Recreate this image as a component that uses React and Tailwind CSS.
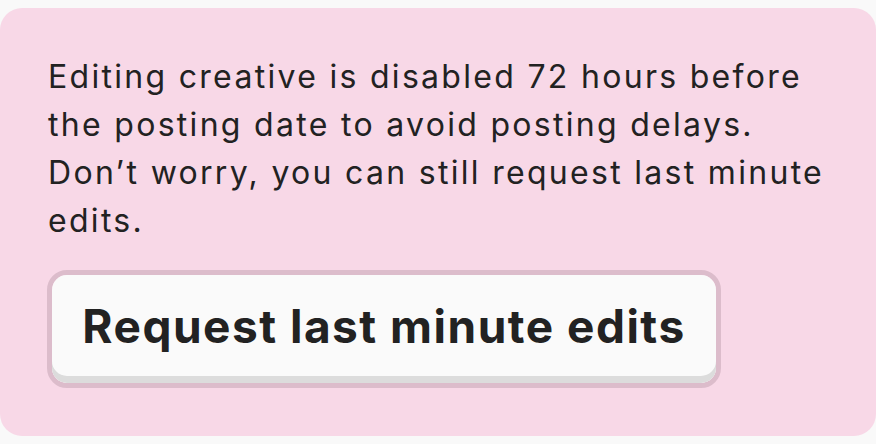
export default function App() {
  return (
    <div className="w-[876px] h-[444px] bg-[#f9f9f9] pt-[8px] font-['Inter','Noto_Sans',sans-serif]">
      <div className="h-[428px] rounded-[22px] bg-[#f8d8e7] pl-[48px] pr-[24px] pt-[45px]">
        <p className="text-[32px] leading-[48px] text-[#222222] tracking-[2.3px] whitespace-nowrap">
          Editing creative is disabled 72 hours before<br />
          the posting date to avoid posting delays.<br />
          Don’t worry, you can still request last minute<br />
          edits.
        </p>
        <div className="mt-[25px] w-[674px] h-[118px] rounded-[20px] border-[5px] border-[#dcbccb] ml-[-1px]">
          <div className="h-full rounded-[15px] bg-[#fafafa] shadow-[inset_0_-7px_0_#dcdcdc] flex items-center justify-center pb-[6px]">
            <span className="text-[46px] leading-none font-bold text-[#222222] tracking-[1.5px] whitespace-nowrap">Request last minute edits</span>
          </div>
        </div>
      </div>
    </div>
  );
}
